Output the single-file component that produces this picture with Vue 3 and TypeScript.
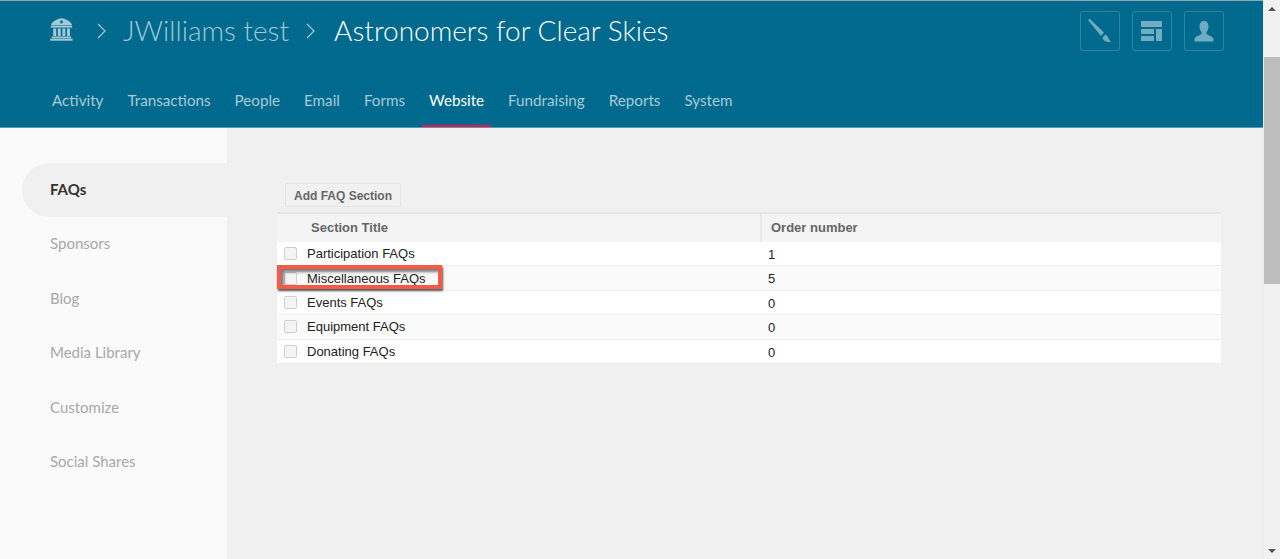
<script setup lang="ts">
const navItems = ['Activity', 'Transactions', 'People', 'Email', 'Forms', 'Website', 'Fundraising', 'Reports', 'System']
const sideItems = ['FAQs', 'Sponsors', 'Blog', 'Media Library', 'Customize', 'Social Shares']
const rows = [
  { title: 'Participation FAQs', order: 1 },
  { title: 'Miscellaneous FAQs', order: 5 },
  { title: 'Events FAQs', order: 0 },
  { title: 'Equipment FAQs', order: 0 },
  { title: 'Donating FAQs', order: 0 },
]
</script>

<template>
  <div class="page">
    <div class="main">
      <header class="header">
        <div class="top">
          <svg class="bank" width="23" height="23" viewBox="0 0 23 23">
            <path fill="#a3c9d6" d="M11.500 0.300 C15 0.600 19.500 2.800 21.800 6 V7.400 H1.200 V6 C3.500 2.800 8 0.600 11.500 0.300 Z" />
            <circle cx="11.500" cy="4" r="1.400" fill="#006a8e" />
            <rect x="0.800" y="8" width="21.400" height="1.600" fill="#a3c9d6" />
            <rect x="3.200" y="10.500" width="3" height="7.500" fill="#a3c9d6" />
            <rect x="7.800" y="10.500" width="3" height="7.500" fill="#a3c9d6" />
            <rect x="12.400" y="10.500" width="3" height="7.500" fill="#a3c9d6" />
            <rect x="17" y="10.500" width="3" height="7.500" fill="#a3c9d6" />
            <rect x="1.800" y="18.500" width="19.400" height="1.800" fill="#a3c9d6" />
            <rect x="0.300" y="20.700" width="22.400" height="2" fill="#a3c9d6" />
          </svg>
          <svg class="chev first" width="9" height="16" viewBox="0 0 9 16"><path d="M1 1 L8 8 L1 15" fill="none" stroke="#a3c9d6" stroke-width="1.2" /></svg>
          <span class="crumb">JWilliams test</span>
          <svg class="chev second" width="9" height="16" viewBox="0 0 9 16"><path d="M1 1 L8 8 L1 15" fill="none" stroke="#a3c9d6" stroke-width="1.2" /></svg>
          <span class="crumb current">Astronomers for Clear Skies</span>
          <div class="tools">
            <button class="tool" type="button" aria-label="Theme">
              <svg width="24" height="26" viewBox="0 0 24 26">
                <path fill="#71adc2" d="M0 2 L1.500 0.800 L16 14.500 L13 18 Z" />
                <path fill="#71adc2" d="M14.500 19.500 L17.500 16.500 C19 17.500 20 19 20.500 20.500 C21 22 22 23 23.300 24 C19.500 24.500 15.500 23.500 14.500 19.500 Z" />
              </svg>
            </button>
            <button class="tool" type="button" aria-label="Layout">
              <svg width="22" height="21" viewBox="0 0 22 21">
                <rect x="0" y="0" width="21" height="6" fill="#71adc2" />
                <rect x="0" y="8" width="13" height="5" fill="#71adc2" />
                <rect x="0" y="15" width="13" height="5" fill="#71adc2" />
                <rect x="15" y="8" width="6" height="12" fill="#71adc2" />
              </svg>
            </button>
            <button class="tool" type="button" aria-label="Profile">
              <svg width="20" height="21" viewBox="0 0 20 21">
                <path fill="#71adc2" d="M10 0 C13 0 14.500 2.500 14.500 5.500 C14.500 8 13.500 10 12.500 11 V13 C14 14.500 19 15 19.500 18 V20.500 H0.500 V18 C1 15 6 14.500 7.500 13 V11 C6.500 10 5.500 8 5.500 5.500 C5.500 2.500 7 0 10 0 Z" />
              </svg>
            </button>
          </div>
        </div>
        <nav class="nav">
          <a v-for="item in navItems" :key="item" class="nav-item" :class="{ active: item === 'Website' }">{{ item }}</a>
        </nav>
      </header>
      <div class="body">
        <aside class="side">
          <a v-for="item in sideItems" :key="item" class="side-item" :class="{ active: item === 'FAQs' }">{{ item }}</a>
        </aside>
        <main class="content">
          <button class="add" type="button">Add FAQ Section</button>
          <div class="table">
            <div class="thead">
              <div class="th first-col">Section Title</div>
              <div class="th second-col">Order number</div>
            </div>
            <div v-for="row in rows" :key="row.title" class="tr">
              <div class="td first-col">
                <span class="check"></span>
                <span>{{ row.title }}</span>
              </div>
              <div class="td second-col">{{ row.order }}</div>
            </div>
            <div class="mark"></div>
          </div>
        </main>
      </div>
    </div>
    <div class="scrollbar">
      <span class="arrow up"></span>
      <div class="track"><div class="thumb"></div></div>
      <span class="arrow down"></span>
    </div>
  </div>
</template>

<style>
html, body { margin: 0; overflow: hidden; }
</style>

<style scoped>
.page {
  display: flex;
  width: 1280px;
  height: 559px;
  overflow: hidden;
  font-family: Lato, sans-serif;
}
.main {
  flex: 1;
  display: flex;
  flex-direction: column;
  min-width: 0;
}
.header {
  height: 128px;
  box-sizing: border-box;
  flex: none;
  background: #006a8e;
  border-top: 1px solid #8fa9b4;
  border-bottom: 1px solid #4f9ab5;
  display: flex;
  flex-direction: column;
}
.top {
  display: flex;
  align-items: center;
  height: 60px;
  padding: 0 39px 0 50px;
}
.bank { margin-top: -3px; }
.chev.first { margin: 0 17px 0 24px; }
.chev.second { margin: 0 19px 0 17px; }
.crumb {
  font-size: 28px;
  font-weight: 300;
  color: #a3c9d6;
  line-height: 58px;
  height: 60px;
}
.crumb.current { color: #fff; }
.tools {
  margin-left: auto;
  display: flex;
  gap: 12px;
}
.tool {
  width: 40px;
  height: 40px;
  padding: 0;
  box-sizing: border-box;
  background: transparent;
  border: 1px solid #2f84a3;
  border-radius: 3px;
  display: flex;
  align-items: center;
  justify-content: center;
}
.nav {
  display: flex;
  gap: 10px;
  padding-left: 45px;
  margin-top: 14px;
}
.nav-item {
  padding: 0 7px;
  height: 52px;
  line-height: 51px;
  box-sizing: border-box;
  font-size: 15.2px;
  color: #a9cbd7;
  border-bottom: 2px solid transparent;
}
.nav-item.active {
  color: #fff;
  border-bottom-color: #e8144f;
}
.body {
  flex: 1;
  display: flex;
  min-height: 0;
}
.side {
  width: 227px;
  flex: none;
  box-sizing: border-box;
  background: #fafafa;
  padding: 35px 0 0 22px;
  display: flex;
  flex-direction: column;
}
.side-item {
  height: 54.4px;
  line-height: 52px;
  padding-left: 28px;
  font-size: 15px;
  color: #a8a8a8;
}
.side-item.active {
  background: #f0f0f0;
  border-radius: 27px 0 0 27px;
  color: #333;
  font-weight: 700;
}
.content {
  flex: 1;
  background: #f0f0f0;
  padding: 55px 42px 0 50px;
  font-family: "Liberation Sans", Arial, sans-serif;
}
.add {
  display: block;
  margin-left: 8px;
  width: 116px;
  height: 24px;
  padding: 1px 0 0;
  box-sizing: border-box;
  background: #f1f1f1;
  border: 1px solid #e4e4e4;
  border-radius: 2px;
  font-family: "Liberation Sans", Arial, sans-serif;
  font-size: 12px;
  font-weight: 700;
  color: #666;
}
.table {
  position: relative;
  margin-top: 5px;
}
.thead {
  display: flex;
  height: 30px;
  box-sizing: border-box;
  background: #f4f4f4;
  border-top: 2px solid #e6e6e6;
}
.th {
  font-size: 13px;
  font-weight: 700;
  color: #666;
  line-height: 28px;
}
.th.first-col { padding-left: 34px; border-right: 2px solid #e8e8e8; }
.th.second-col { padding-left: 9px; }
.first-col { width: 485px; box-sizing: border-box; flex: none; }
.tr {
  display: flex;
  height: 24.4px;
  box-sizing: border-box;
  background: #fff;
  border-bottom: 1px solid #eee;
}
.tr:nth-child(odd) { background: #fafafa; }
.td {
  font-size: 13px;
  color: #222;
  line-height: 25px;
}
.td.first-col {
  display: flex;
  align-items: center;
  padding-left: 7px;
  gap: 10px;
}
.td.second-col { padding-left: 6px; }
.check {
  width: 13px;
  height: 13px;
  box-sizing: border-box;
  background: #f4f4f4;
  border: 1px solid #cfcfcf;
  border-radius: 2px;
  flex: none;
}
.mark {
  position: absolute;
  left: 0;
  top: 53px;
  width: 165px;
  height: 24px;
  box-sizing: border-box;
  border: 4px solid #f95a47;
  box-shadow: 1px 2px 2px rgba(0, 0, 0, 0.65), inset 3px 3px 3px rgba(0, 0, 0, 0.5);
}
.scrollbar {
  width: 17px;
  flex: none;
  background: #f1f1f1;
  border-left: 1px solid #e8eef0;
  box-sizing: border-box;
  display: flex;
  flex-direction: column;
  align-items: center;
}
.arrow {
  width: 0;
  height: 0;
  border-left: 4px solid transparent;
  border-right: 4px solid transparent;
  flex: none;
}
.arrow.up { border-bottom: 4px solid #505050; margin-top: 7px; }
.arrow.down { border-top: 4px solid #505050; margin-bottom: 6px; }
.track {
  flex: 1;
  width: 100%;
  padding-top: 46px;
  box-sizing: border-box;
}
.thumb {
  height: 227px;
  background: #bebebe;
}
</style>
